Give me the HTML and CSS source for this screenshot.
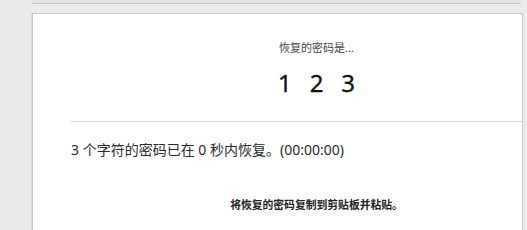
FILE: index.html
```html
<!DOCTYPE html>
<html lang="zh-CN">
<head>
    <meta charset="UTF-8">
    <title>密码恢复</title>
    <link rel="stylesheet" href="styles.css">
</head>
<body>
    <div class="top-bar"></div>

    <div class="card">
        <div class="result">
            <p class="result-label">恢复的密码是...</p>
            <div class="password">
                <span>1</span>
                <span>2</span>
                <span>3</span>
            </div>
        </div>

        <div class="divider"></div>

        <p class="summary">3 个字符的密码已在 0 秒内恢复。(00:00:00)</p>

        <p class="hint">将恢复的密码复制到剪贴板并粘贴。</p>
    </div>
</body>
</html>
```

FILE: styles.css
```css
* {
    margin: 0;
    padding: 0;
    box-sizing: border-box;
}

body {
    background: #ebebeb;
    font-family: "Noto Sans", "Noto Sans CJK SC", sans-serif;
    color: #333;
    height: 230px;
    overflow: hidden;
}

.top-bar {
    margin-left: 32px;
    width: 489px;
    height: 4px;
    background: #e4e4e4;
    border-bottom: 1px solid #c6c6c6;
}

.card {
    margin-top: 9px;
    margin-left: 32px;
    width: 491px;
    height: 217px;
    background: #fff;
    border: 1px solid #c8c8c8;
    border-bottom: none;
    box-shadow: -1px 0 0 #dcdcdc;
}

.result {
    margin-left: 78px;
    padding-top: 26px;
    text-align: center;
}

.result-label {
    font-size: 11px;
    line-height: 16px;
    color: #444;
}

.password {
    margin-top: 12px;
    display: flex;
    justify-content: center;
    gap: 18px;
    font-size: 24px;
    line-height: 30px;
    color: #111;
    -webkit-text-stroke: 0.3px #111;
}

.divider {
    margin-top: 23px;
    margin-left: 38px;
    height: 1px;
    background: #d4d4d4;
}

.summary {
    margin-top: 19px;
    margin-left: 38px;
    font-size: 14px;
    line-height: 18px;
    color: #2a2a2a;
}

.hint {
    margin-top: 38px;
    margin-left: 78px;
    text-align: center;
    font-size: 10.8px;
    line-height: 16px;
    font-weight: bold;
    color: #222;
}
```
